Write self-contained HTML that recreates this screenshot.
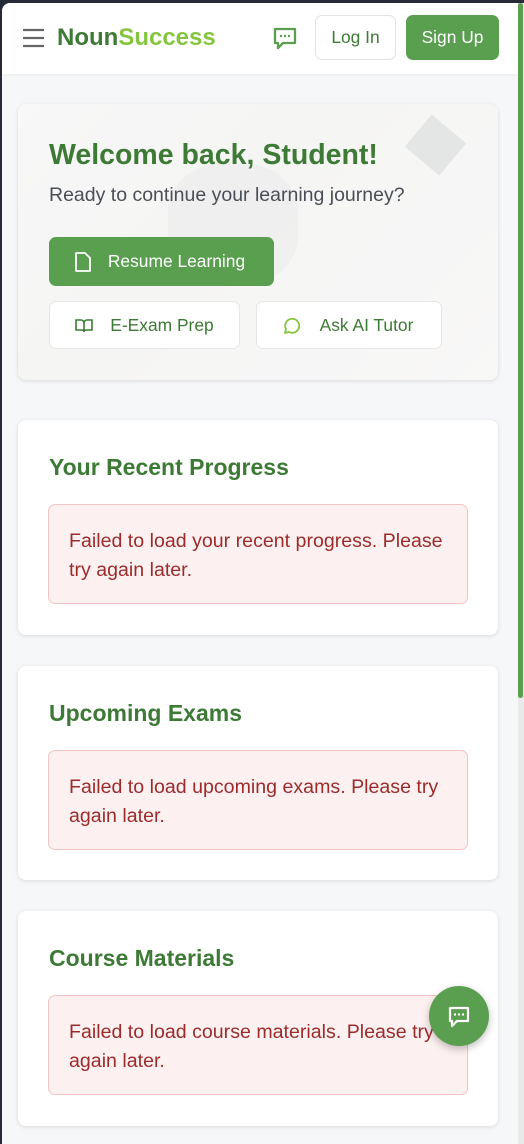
<!DOCTYPE html>
<html><head><meta charset="utf-8"><style>
*{box-sizing:border-box;margin:0;padding:0}
body{width:524px;height:1144px;overflow:hidden;background:#262a36;font-family:"Liberation Sans",sans-serif}
.frame{position:absolute;left:2px;top:3px;width:516px;height:1141px;background:#f6f7f9;border-radius:8px 0 0 0;overflow:hidden}
.sb{position:absolute;left:518px;top:3px;width:6px;height:1141px;background:#e8eae8}
.sbt{position:absolute;left:518px;top:3px;width:5px;height:695px;background:#5a9e4f;border-radius:3px}
.hdr{position:absolute;left:0;top:0;width:516px;height:71px;background:#fff;box-shadow:0 1px 3px rgba(0,0,0,.06)}
.logo{position:absolute;left:55px;top:21px;font-size:24px;font-weight:bold;color:#3d7a35}
.logo span{color:#86c540}
.btn{position:absolute;border-radius:7px;font-size:17.4px;text-align:center}
.card{position:absolute;left:16px;width:480px;background:#fff;border-radius:8px;box-shadow:0 1px 4px rgba(0,0,0,.12)}
.card h2{position:absolute;left:31px;top:34px;font-size:23px;font-weight:bold;color:#3d7a35}
.err{position:absolute;left:30px;top:84px;width:420px;height:100px;background:#fdf0f0;border:1px solid #f3c4c4;border-radius:7px;padding:22px 20px;font-size:19.6px;line-height:29px;color:#9b2c2c}
</style></head><body>
<div class="frame">
<div class="hdr">
<svg style="position:absolute;left:20px;top:25px" width="23" height="20"><path d="M1 2h21M1 10h21M1 18h21" stroke="#666" stroke-width="2.2"/></svg>
<div class="logo">Noun<span>Success</span></div>
<svg style="position:absolute;left:270px;top:23px" width="26" height="26" viewBox="0 0 26 26"><path d="M3 3h20v14H11l-5 5v-5H3z" fill="none" stroke="#5a9e4f" stroke-width="2.3" stroke-linejoin="round"/><circle cx="9" cy="10" r="1.2" fill="#5a9e4f"/><circle cx="13" cy="10" r="1.2" fill="#5a9e4f"/><circle cx="17" cy="10" r="1.2" fill="#5a9e4f"/></svg>
<div class="btn" style="left:313px;top:12px;width:81px;height:45px;border:1px solid #e3e3e3;color:#3d7a35;line-height:43px;background:#fff">Log In</div>
<div class="btn" style="left:404px;top:12px;width:93px;height:45px;background:#5a9e4f;color:#fff;line-height:45px">Sign Up</div>
</div>
<div class="card" style="top:101px;height:276px;background:linear-gradient(135deg,#efefef,#e8e8e6 40%,#f0efee);overflow:hidden">
<div style="position:absolute;left:150px;top:60px;width:130px;height:120px;background:#cfd0d0;border-radius:40%;opacity:.5"></div>
<div style="position:absolute;left:395px;top:20px;width:45px;height:42px;background:#a9adae;transform:rotate(40deg);opacity:.6"></div>
<div style="position:absolute;left:0;top:0;width:480px;height:276px;background:rgba(255,255,255,.55)"></div>
<div style="position:absolute;left:31px;top:35px;font-size:28.5px;font-weight:bold;color:#3d7a35">Welcome back, Student!</div>
<div style="position:absolute;left:31px;top:80px;font-size:19.5px;color:#4a4f57">Ready to continue your learning journey?</div>
<div class="btn" style="left:31px;top:133px;width:225px;height:49px;background:#5a9e4f;color:#fff;line-height:49px;padding-left:30px">Resume Learning</div>
<svg style="position:absolute;left:56px;top:148px" width="17" height="20"><path d="M2 1h9l5 5v13H2z" fill="none" stroke="#fff" stroke-width="1.8" stroke-linejoin="round"/></svg>
<div class="btn" style="left:31px;top:197px;width:191px;height:48px;background:#fff;border:1px solid #e6e6e6;color:#3d7a35;line-height:46px;padding-left:35px">E-Exam Prep</div>
<svg style="position:absolute;left:57px;top:214px" width="18" height="15"><path d="M1 2h5a3 3 0 0 1 3 3v9a2 2 0 0 0-2-2H1zM17 2h-5a3 3 0 0 0-3 3v9a2 2 0 0 1 2-2h6z" fill="none" stroke="#3d7a35" stroke-width="1.6"/></svg>
<div class="btn" style="left:238px;top:197px;width:186px;height:48px;background:#fff;border:1px solid #e6e6e6;color:#3d7a35;line-height:46px;padding-left:35px">Ask AI Tutor</div>
<svg style="position:absolute;left:264px;top:213px" width="18" height="18"><path d="M3 16l1-4a7 7 0 1 1 3 3z" fill="none" stroke="#86c540" stroke-width="1.8" stroke-linejoin="round"/></svg>
</div>
<div class="card" style="top:417px;height:215px"><h2>Your Recent Progress</h2><div class="err">Failed to load your recent progress. Please try again later.</div></div>
<div class="card" style="top:663px;height:214px"><h2>Upcoming Exams</h2><div class="err">Failed to load upcoming exams. Please try again later.</div></div>
<div class="card" style="top:908px;height:215px"><h2>Course Materials</h2><div class="err">Failed to load course materials. Please try again later.</div></div>
<div style="position:absolute;left:427px;top:983px;width:60px;height:60px;border-radius:50%;background:#5a9e4f;box-shadow:0 3px 8px rgba(0,0,0,.25)"></div>
<svg style="position:absolute;left:445px;top:1002px" width="24" height="24" viewBox="0 0 24 24"><path d="M3 3h18v13H10l-5 5v-5H3z" fill="none" stroke="#fff" stroke-width="2.2" stroke-linejoin="round"/><circle cx="8" cy="9.5" r="1.2" fill="#fff"/><circle cx="12" cy="9.5" r="1.2" fill="#fff"/><circle cx="16" cy="9.5" r="1.2" fill="#fff"/></svg>
</div>
<div class="sb"></div><div class="sbt"></div>
</body></html>
